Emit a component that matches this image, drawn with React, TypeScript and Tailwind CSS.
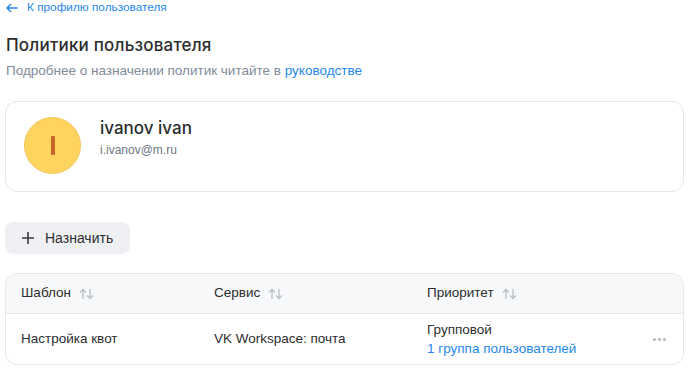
import React from "react";

const SortIcon = () => (
  <svg width="16" height="12" viewBox="0 0 16 12" fill="none" className="ml-2">
    <path d="M4 11V1.5M1 4.5L4 1.5L7 4.5" stroke="#bcc1c8" strokeWidth="1.4" />
    <path d="M11 1v9.5M8 7.5L11 10.5L14 7.5" stroke="#bcc1c8" strokeWidth="1.4" />
  </svg>
);

const columns = ["Шаблон", "Сервис", "Приоритет"];

export default function App() {
  return (
    <div className="w-[689px] h-[369px] bg-white px-[5px] font-['Liberation_Sans',Arial,sans-serif] text-[#2c2d2e] overflow-hidden">
      <a className="flex h-4 items-center pl-[1px] text-[11.8px] text-[#2688eb]">
        <svg width="12" height="10" viewBox="0 0 12 10" fill="none">
          <path d="M11.5 5H1.5M5 1L1 5L5 9" stroke="#2688eb" strokeWidth="1.5" />
        </svg>
        <span className="ml-[9px]">К профилю пользователя</span>
      </a>

      <h1 className="mt-[17px] pl-[1px] text-[17px] leading-6 font-medium font-['Inter',sans-serif] tracking-[0.2px]">
        Политики пользователя
      </h1>
      <p className="mt-1 pl-[1px] text-[13.5px] leading-5 text-[#818c99]">
        Подробнее о назначении политик читайте в{" "}
        <span className="text-[#2688eb]">руководстве</span>
      </p>

      <div className="mt-5 flex h-[91px] items-start rounded-xl border border-[#e7e8ec] pl-[18px] pt-[15px]">
        <div className="flex h-[57px] w-[57px] items-center justify-center rounded-full border border-[#f1c758] bg-[#ffd45e]">
          <div className="h-[19px] w-[4px] rounded-[1px] bg-[#c8662a]" />
        </div>
        <div className="ml-[19px] flex flex-col">
          <div className="text-[17px] leading-[22px] font-medium font-['Inter',sans-serif]">
            ivanov ivan
          </div>
          <div className="mt-[3px] text-[12px] leading-4 text-[#6d7885]">
            i.ivanov@m.ru
          </div>
        </div>
      </div>

      <button className="mt-[30px] flex h-8 w-[125px] items-center rounded-lg bg-[#eff0f3] pl-[16px] text-[14px]">
        <svg width="14" height="14" viewBox="0 0 14 14" fill="none">
          <path d="M7 1v12M1 7h12" stroke="#3a3b3d" strokeWidth="1.6" />
        </svg>
        <span className="ml-[10px]">Назначить</span>
      </button>

      <div className="mt-[19px] overflow-hidden rounded-xl border border-[#e7e8ec]">
        <div className="flex h-10 items-center border-b border-[#e7e8ec] bg-[#f7f8fa] text-[13.5px]">
          {columns.map((c, i) => (
            <div
              key={c}
              className={
                i === 0
                  ? "flex w-[193px] items-center pl-[15px]"
                  : i === 1
                  ? "flex w-[213px] items-center pl-[15px]"
                  : "flex flex-1 items-center pl-[15px]"
              }
            >
              {c}
              <SortIcon />
            </div>
          ))}
        </div>
        <div className="flex h-[50px] items-center text-[13.5px]">
          <div className="w-[193px] pl-[15px]">Настройка квот</div>
          <div className="w-[213px] pl-[15px]">VK Workspace: почта</div>
          <div className="flex-1 pl-[15px] leading-[19px]">
            <div>Групповой</div>
            <div className="text-[#2688eb]">1 группа пользователей</div>
          </div>
          <div className="mr-[17px] flex gap-[2px]">
            <span className="h-[3px] w-[3px] rounded-full bg-[#b2b7bf]" />
            <span className="h-[3px] w-[3px] rounded-full bg-[#b2b7bf]" />
            <span className="h-[3px] w-[3px] rounded-full bg-[#b2b7bf]" />
          </div>
        </div>
      </div>
    </div>
  );
}
